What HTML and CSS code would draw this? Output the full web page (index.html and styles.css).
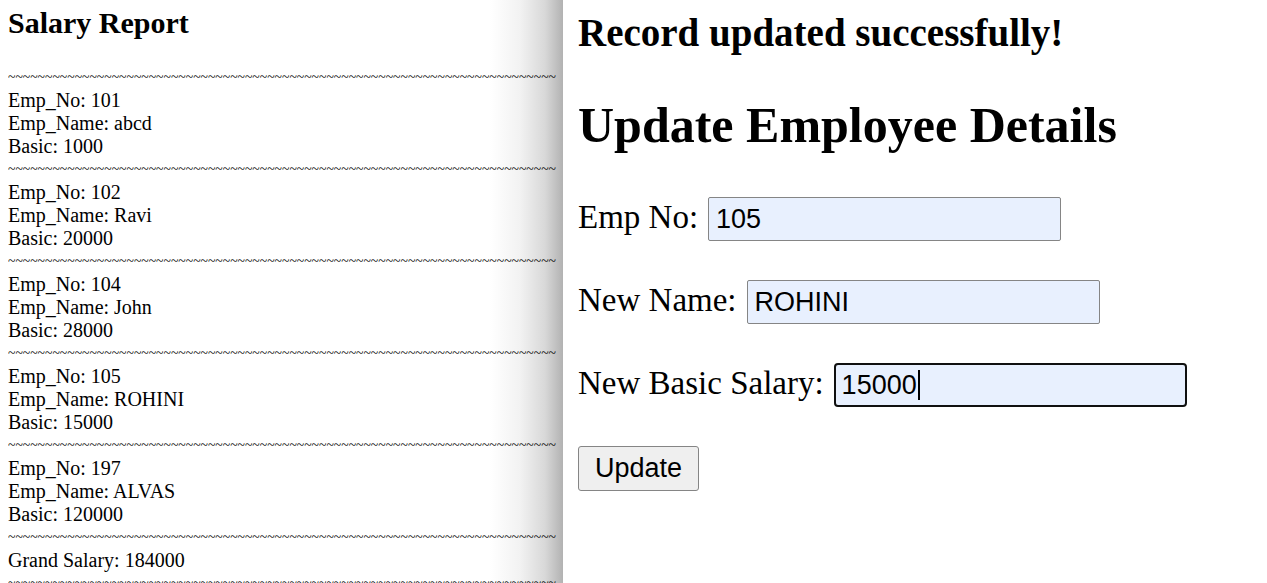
FILE: index.html
```html
<!DOCTYPE html>
<html>
<head>
<meta charset="utf-8">
<link rel="stylesheet" href="styles.css">
</head>
<body>
<div class="screen">
  <div class="report">
    <h2 class="report-title">Salary Report</h2>
    <div class="rows">
      <div class="sep">~~~~~~~~~~~~~~~~~~~~~~~~~~~~~~~~~~~~~~~~~~~~~~~~~~~~~~~~~~~~~~~~~~~~~~~~~~</div>
      <div>Emp_No: 101</div>
      <div>Emp_Name: abcd</div>
      <div>Basic: 1000</div>
      <div class="sep">~~~~~~~~~~~~~~~~~~~~~~~~~~~~~~~~~~~~~~~~~~~~~~~~~~~~~~~~~~~~~~~~~~~~~~~~~~</div>
      <div>Emp_No: 102</div>
      <div>Emp_Name: Ravi</div>
      <div>Basic: 20000</div>
      <div class="sep">~~~~~~~~~~~~~~~~~~~~~~~~~~~~~~~~~~~~~~~~~~~~~~~~~~~~~~~~~~~~~~~~~~~~~~~~~~</div>
      <div>Emp_No: 104</div>
      <div>Emp_Name: John</div>
      <div>Basic: 28000</div>
      <div class="sep">~~~~~~~~~~~~~~~~~~~~~~~~~~~~~~~~~~~~~~~~~~~~~~~~~~~~~~~~~~~~~~~~~~~~~~~~~~</div>
      <div>Emp_No: 105</div>
      <div>Emp_Name: ROHINI</div>
      <div>Basic: 15000</div>
      <div class="sep">~~~~~~~~~~~~~~~~~~~~~~~~~~~~~~~~~~~~~~~~~~~~~~~~~~~~~~~~~~~~~~~~~~~~~~~~~~</div>
      <div>Emp_No: 197</div>
      <div>Emp_Name: ALVAS</div>
      <div>Basic: 120000</div>
      <div class="sep">~~~~~~~~~~~~~~~~~~~~~~~~~~~~~~~~~~~~~~~~~~~~~~~~~~~~~~~~~~~~~~~~~~~~~~~~~~</div>
      <div>Grand Salary: 184000</div>
      <div class="sep">~~~~~~~~~~~~~~~~~~~~~~~~~~~~~~~~~~~~~~~~~~~~~~~~~~~~~~~~~~~~~~~~~~~~~~~~~~</div>
    </div>
  </div>
  <div class="update">
    <h2 class="status">Record updated successfully!</h2>
    <h1 class="form-title">Update Employee Details</h1>
    <form class="form">
      <div class="row">
        <label class="label">Emp No:</label>
        <input class="field" type="text" value="105">
      </div>
      <div class="row">
        <label class="label">New Name:</label>
        <input class="field" type="text" value="ROHINI">
      </div>
      <div class="row">
        <label class="label">New Basic Salary:</label>
        <span class="field-wrap">
          <input class="field focused" type="text" value="15000">
          <span class="caret"></span>
        </span>
      </div>
      <div class="row row-btn">
        <button class="btn" type="button">Update</button>
      </div>
    </form>
  </div>
</div>
</body>
</html>
```
FILE: styles.css
```css
html, body {
  margin: 0;
  padding: 0;
  background: #fff;
}

.screen {
  display: flex;
  width: 1267px;
  height: 583px;
  overflow: hidden;
  font-family: "Liberation Serif", "Times New Roman", serif;
  color: #000;
}

.report {
  width: 563px;
  flex: none;
  overflow: hidden;
  padding-left: 8px;
  box-sizing: border-box;
  background: linear-gradient(to right, #ffffff 0, #ffffff 490px, #f2f2f2 520px, #d8d8d8 545px, #b2b2b2 563px);
}

.report-title {
  font-size: 30px;
  font-weight: bold;
  line-height: 34px;
  margin: 6px 0 26px 0;
}

.rows {
  font-size: 20px;
  line-height: 23px;
}

.sep {
  white-space: nowrap;
  font-size: 13.7px;
  line-height: 23px;
  overflow: hidden;
}

.update {
  flex: 1;
  padding-left: 15px;
  background: #fff;
}

.status {
  font-size: 39px;
  font-weight: bold;
  line-height: 44px;
  margin: 11px 0 0 0;
}

.form-title {
  font-size: 50px;
  font-weight: bold;
  line-height: 57px;
  margin: 42px 0 0 0;
}

.form {
  display: flex;
  flex-direction: column;
  gap: 39px;
  margin-top: 43px;
}

.row {
  display: flex;
  align-items: center;
  gap: 10px;
  height: 44px;
}

.row-btn {
  height: auto;
}

.label {
  font-size: 33px;
  line-height: 38px;
  position: relative;
  top: -2px;
}

.field {
  width: 353px;
  height: 44px;
  box-sizing: border-box;
  border: 1px solid #858585;
  border-radius: 2px;
  background: #e8f0fe;
  font-family: "Liberation Sans", Arial, sans-serif;
  font-size: 27px;
  color: #000;
  padding: 0 7px;
  margin: 0;
  outline: none;
}

.field.focused {
  border: 2px solid #101010;
  border-radius: 4px;
  padding: 0 6px;
}

.field-wrap {
  position: relative;
  display: inline-block;
  height: 44px;
}

.caret {
  position: absolute;
  left: 84px;
  top: 7px;
  width: 2px;
  height: 30px;
  background: #000;
}

.btn {
  width: 121px;
  height: 45px;
  box-sizing: border-box;
  border: 1px solid #858585;
  border-radius: 3px;
  background: #efefef;
  font-family: "Liberation Sans", Arial, sans-serif;
  font-size: 27px;
  line-height: 43px;
  color: #000;
  padding: 0;
  margin: 0;
}
```
